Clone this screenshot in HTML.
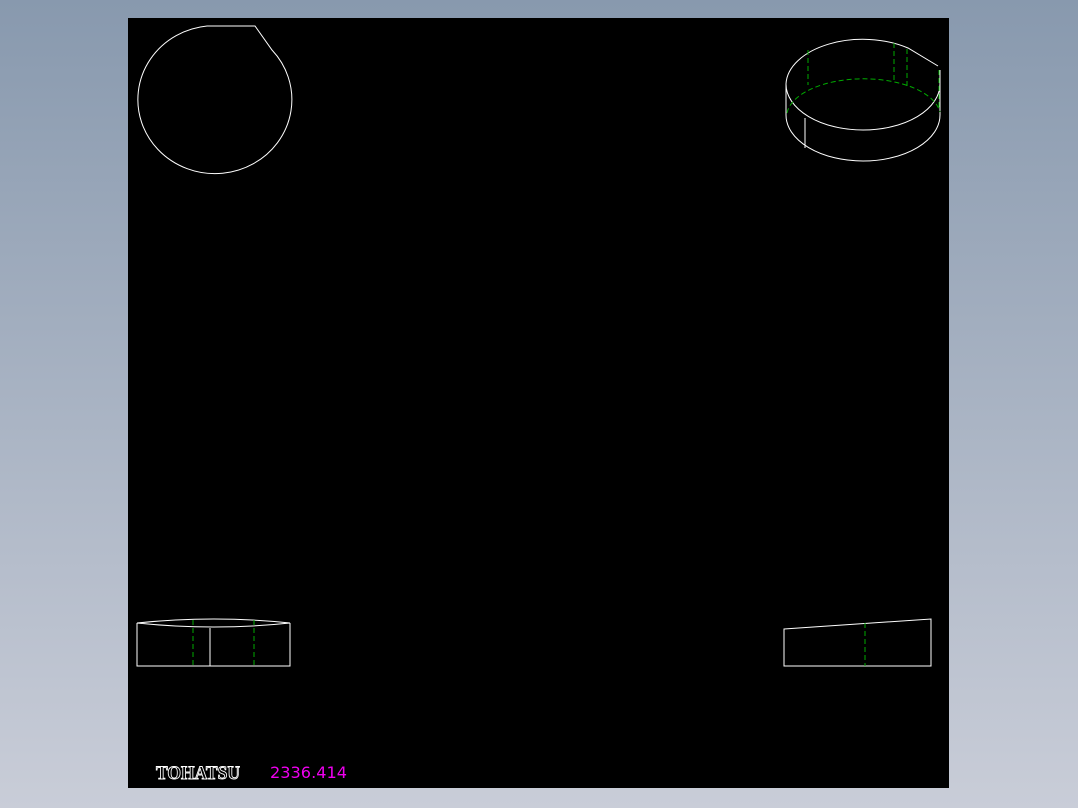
<!DOCTYPE html><html><head><style>body{margin:0;width:1078px;height:808px;overflow:hidden;background:linear-gradient(#8899ae,#c9cdd8)}</style></head><body>
<svg width="1078" height="808" style="position:absolute;left:0;top:0">
<rect x="128" y="18" width="821" height="770" fill="#000"/>
<g fill="none" stroke="#fff" stroke-width="1">
<path d="M207,26 L255,26 L272,50 A77,74 0 1 1 207,26 Z"/>
<path d="M786,84 A77,46 0 0 1 908,48 L938,66 M786,84 A77,46 0 0 0 940,84"/>
<path d="M786,84 L786,115 A77,46 0 0 0 940,115 L940,70"/>
<path d="M805,118 L805,148"/>
<path d="M137,623 Q214,615 290,623 Q214,631 137,623 Z M137,623 L137,666 L290,666 L290,623 M210,628 L210,666"/>
<path d="M784,629 L931,619 L931,666 L784,666 Z"/>
</g>
<g fill="none" stroke="#0a0" stroke-width="1" stroke-dasharray="5,3">
<path d="M787,113 A77,38 0 0 1 940,112"/>
<path d="M808,50 L808,85 M894,43 L894,82 M907,49 L907,88 M939,70 L939,108"/>
<path d="M193,620 L193,666 M254,620 L254,666 M865,623 L865,666"/>
</g>
<text x="156" y="779" font-family="Liberation Serif,serif" font-weight="bold" font-size="19" textLength="84" lengthAdjust="spacingAndGlyphs" fill="#000" stroke="#fff" stroke-width="0.9">TOHATSU</text>
<text x="270" y="778" font-family="DejaVu Sans,sans-serif" font-size="16" textLength="77" lengthAdjust="spacingAndGlyphs" fill="#e0e">2336.414</text>
</svg></body></html>
